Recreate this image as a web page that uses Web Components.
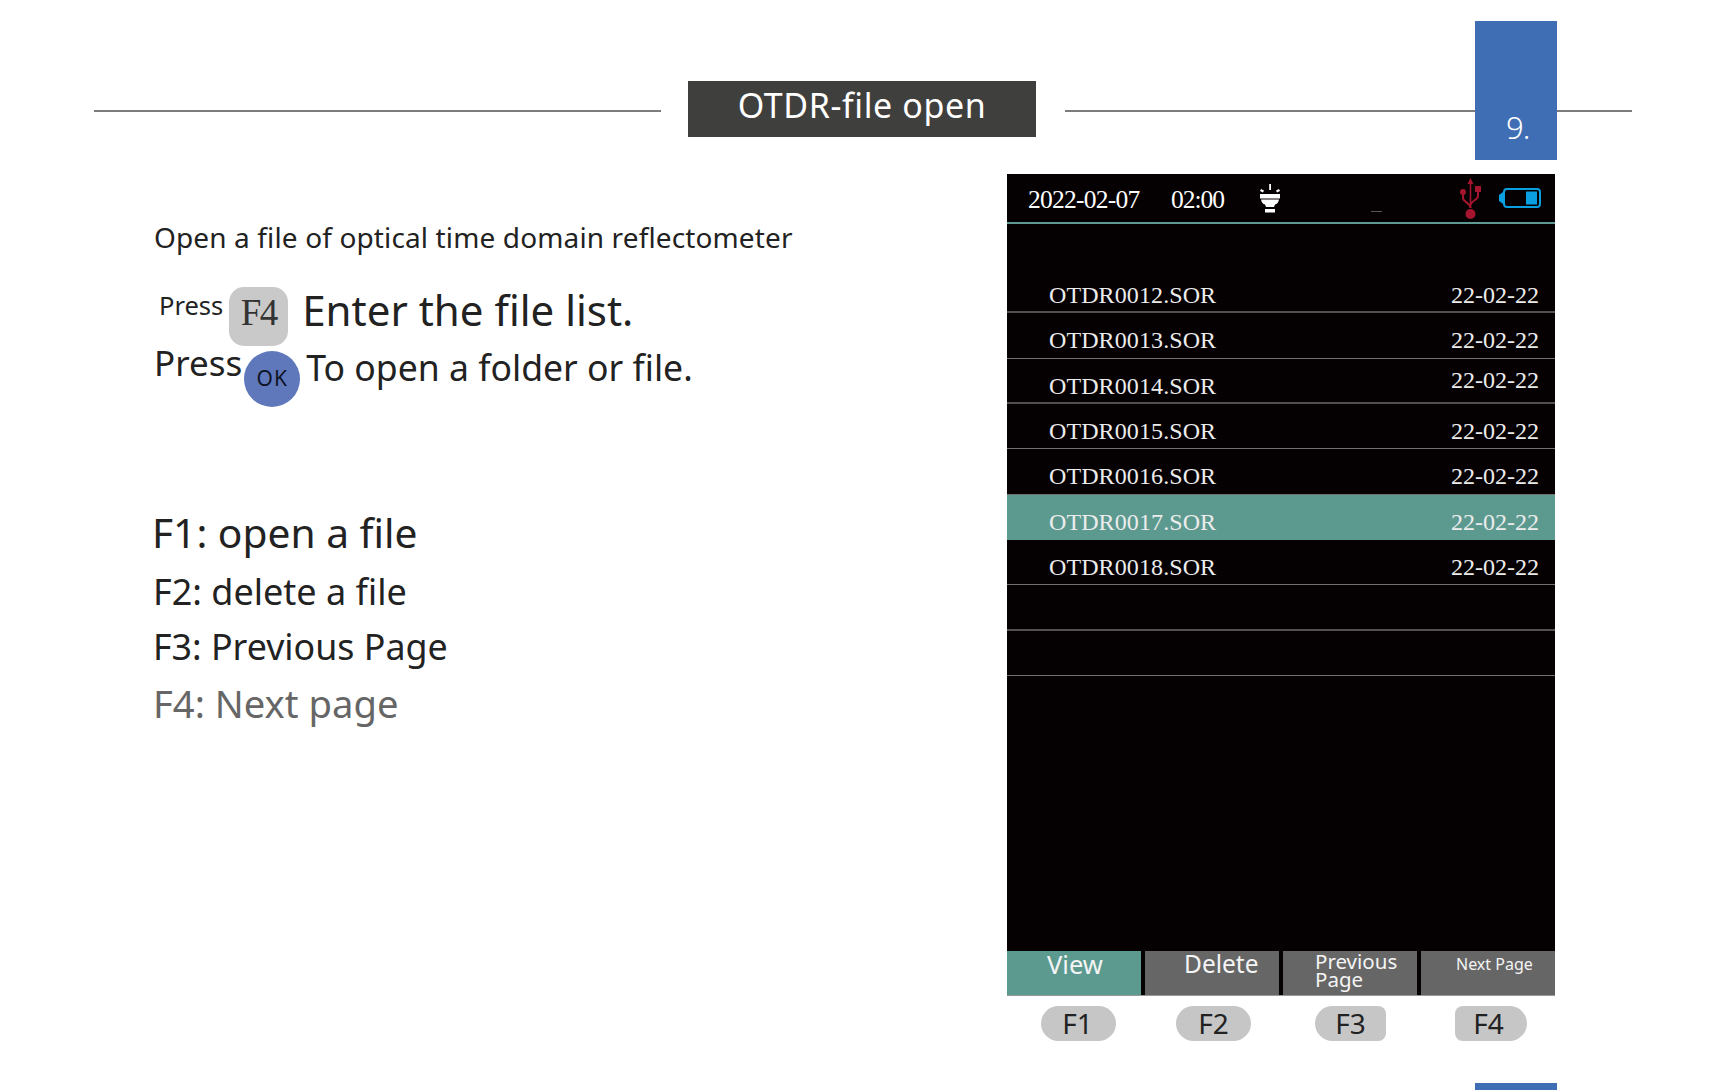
<!DOCTYPE html>
<html>
<head>
<meta charset="utf-8">
<style>
    html, body { margin: 0; background: #fff; }
    body { font-family: 'Noto Sans', sans-serif; color: #222; }
</style>
</head>
<body>

<template id="slide-page-tmpl">
    <style>
        :host { display: flex; flex-direction: column; width: 1724px; height: 1091px; overflow: hidden; position: relative; }
        .body { display: flex; padding: 37px 0 0 0; }
        .left { width: 1007px; box-sizing: border-box; padding: 45px 0 0 153px; }
        .foot { display: flex; justify-content: flex-end; padding: 42px 167px 0 0; }
    </style>
    <slot name="header"></slot>
    <div class="body">
        <div class="left"><slot name="text"></slot></div>
        <div><slot name="device"></slot></div>
    </div>
    <div class="foot"><slot name="foot"></slot></div>
</template>

<template id="slide-header-tmpl">
    <style>
        :host { display: flex; align-items: center; padding: 81px 92px 0 94px; position: relative; }
        .line { flex: 1; height: 2px; background: #7c7c7c; margin-top: 4px; }
        .title { width: 348px; height: 56px; margin: 0 29px 0 27px; background: #3f3f3e; color: #fff; font-size: 34px; letter-spacing: 0.6px; display: flex; align-items: center; justify-content: center; padding-bottom: 8px; box-sizing: border-box; }
        .num { position: absolute; left: 1475px; top: 21px; }
    </style>
    <div class="line"></div>
    <div class="title"><slot></slot></div>
    <div class="line"></div>
    <page-tab class="num" label="9."></page-tab>
</template>

<template id="page-tab-tmpl">
    <style>
        :host { display: block; width: 82px; background: #3f6eb4; color: #fff; font-size: 31px; font-weight: 300; }
        div { height: 139px; box-sizing: border-box; padding: 85px 0 0 31px; letter-spacing: -1px; }
        :host([stub]) div { height: 7px; padding: 0; }
    </style>
    <div></div>
</template>

<template id="text-line-tmpl">
    <style>
        :host { display: flex; align-items: flex-start; }
        :host([muted]) { color: #666; }
    </style>
    <slot></slot>
</template>

<template id="key-cap-tmpl">
    <style>
        :host { display: flex; align-items: center; justify-content: center; box-sizing: border-box; }
        :host([kind='f']) { width: 59px; height: 59px; border-radius: 15px; background: #c9c9c9; color: #333; font: 37px 'Liberation Serif', serif; letter-spacing: -1.5px; padding-bottom: 8px; }
        :host([kind='ok']) { width: 56px; height: 56px; border-radius: 50%; background: #5f78bc; color: #0f1426; font: 21px 'Noto Sans', sans-serif; letter-spacing: 1px; padding-bottom: 2px; }
    </style>
    <slot></slot>
</template>

<template id="device-screen-tmpl">
    <style>
        :host { display: block; width: 548px; }
        .screen { height: 822px; background: #050002; display: flex; flex-direction: column; }
        .status { height: 48px; border-bottom: 2px solid #5f9a94; padding: 0 14px 0 21px; display: flex; align-items: center; color: #fff; font: 25.500px 'Liberation Serif', serif; position: relative; }
        .date { width: 143px; letter-spacing: -0.74px; padding-top: 3px; }
        .time { width: 89px; letter-spacing: -1px; padding-top: 3px; }
        .lamp { width: 20px; height: 29px; }
        .usb { width: 21px; height: 41px; margin-left: auto; margin-right: 18px; }
        .batt { width: 42px; height: 20px; }
        .dash { position: absolute; left: 364px; top: 37px; width: 11px; height: 1px; background: #555; }
        .list { padding-top: 44px; }
        .soft { margin-top: auto; display: flex; gap: 4px; border-bottom: 1px solid #999; }
        .pills { display: flex; padding-top: 10px; }
    </style>
    <div class="screen">
        <div class="status">
            <span class="date">2022-02-07</span><span class="time">02:00</span>
            <svg class="lamp" viewBox="0 0 20 29">
                <path fill="#fff" d="M1 5l3 1.500-1 2L0 7zM9.200 0h1.800v6H9.200zM19 5l1 2-3 1.500-1-2z"/>
                <path fill="#fff" d="M0 10h20v4.500H0zM1 15.500h18c-.5 3-2 4.500-4 5l-1 2.500H6l-1-2.500c-2-.5-3.500-2-4-5zM5 25h10v3.500H5z"/>
            </svg>
            <i class="dash"></i>
            <svg class="usb" viewBox="0 0 21 41">
                <g fill="#a5162e">
                    <path d="M10.500 0l3 6h-2.200v24h-1.600V6H7.500z"/>
                    <path fill="none" stroke="#a5162e" stroke-width="2" d="M3 14v6c0 4 7.500 5 7.500 10M18 11v7c0 4-7.500 5-7.500 9"/>
                    <circle cx="3" cy="14" r="3"/>
                    <rect x="15" y="8" width="6" height="6"/>
                    <circle cx="10.500" cy="36" r="5"/>
                </g>
            </svg>
            <svg class="batt" viewBox="0 0 42 20">
                <path fill="#0a9fe0" d="M0 7l4-3v12l-4-3z"/>
                <rect x="5" y="1" width="36" height="18" rx="3" fill="none" stroke="#0a9fe0" stroke-width="2"/>
                <rect x="27" y="3.500" width="11" height="13" fill="#0a9fe0"/>
            </svg>
        </div>
        <div class="list"><slot name="row"></slot></div>
        <div class="soft"><slot name="soft"></slot></div>
    </div>
    <div class="pills"><slot name="pill"></slot></div>
</template>

<template id="file-row-tmpl">
    <style>
        :host { display: flex; box-sizing: border-box; height: 45.350px; padding: 12px 16px 0 42px; justify-content: space-between; border-bottom: 1px solid #707070; color: #ececec; font: 24px/30px 'Liberation Serif', serif; }
        :host([thick]) { border-bottom: 2px solid #505050; }
        :host([selected]) { background: #5c9a90; border-bottom-color: #5c9a90; }
        .name { letter-spacing: 0.1px; }
        :host([lift]) .date { margin-top: -6px; }
    </style>
    <span class="name"><slot></slot></span>
    <span class="date"><slot name="date"></slot></span>
</template>

<template id="soft-key-tmpl">
    <style>
        :host { display: block; flex: 1; height: 44px; box-sizing: border-box; background: #666; color: #f4f4f4; font-size: 24.500px; line-height: 26px; }
        :host([active]) { background: #5c9a90; }
        div { padding: var(--pad, 0 0 0 0); }
    </style>
    <div><slot></slot></div>
</template>

<template id="fn-pill-tmpl">
    <style>
        :host { display: flex; box-sizing: border-box; height: 35px; border-radius: var(--radius, 18px); background: #c6c6c6; color: #222; font-size: 28px; line-height: 35px; justify-content: center; }
    </style>
    <slot></slot>
</template>

<script>
    function tpl(name) {
        return class extends HTMLElement {
            connectedCallback() {
                if (this.shadowRoot) return;
                this.attachShadow({ mode: 'open' });
                this.shadowRoot.append(document.getElementById(name + '-tmpl').content.cloneNode(true));
                if (name == 'page-tab' && this.getAttribute('label')) {
                    this.shadowRoot.querySelector('div').textContent = this.getAttribute('label');
                }
            }
        };
    }
    ['slide-page', 'slide-header', 'page-tab', 'text-line', 'key-cap', 'device-screen', 'file-row', 'soft-key', 'fn-pill']
        .forEach((n) => customElements.define(n, tpl(n)));
</script>

<slide-page>
    <slide-header slot="header">OTDR-file open</slide-header>

    <div slot="text">
        <text-line style="font-size:28px;line-height:36px;height:68px;letter-spacing:0.13px;margin-left:1px">Open a file of optical time domain reflectometer</text-line>
        <text-line style="height:64px;margin-left:1px">
            <span style="font-size:25.500px;line-height:32px;margin:2px 6px 0 5px">Press</span>
            <key-cap kind="f">F4</key-cap>
            <span style="font-size:42px;line-height:52px;margin:-3px 0 0 14px">Enter the file list.</span>
        </text-line>
        <text-line style="height:156px;margin-left:1px">
            <span style="font-size:35px;line-height:44px;margin:-10px 2px 0 0">Press</span>
            <key-cap kind="ok">OK</key-cap>
            <span style="font-size:35.600px;line-height:44px;margin:-6px 0 0 6px">To open a folder or file.</span>
        </text-line>
        <text-line style="font-size:40.700px;line-height:50px;height:60px;margin-left:-1px">F1: open a file</text-line>
        <text-line style="font-size:36px;line-height:50px;height:54px">F2: delete a file</text-line>
        <text-line style="font-size:35.800px;line-height:50px;height:57px">F3: Previous Page</text-line>
        <text-line muted style="font-size:38.200px;line-height:50px">F4: Next page</text-line>
    </div>

    <device-screen slot="device">
        <file-row slot="row" thick>OTDR0012.SOR<span slot="date">22-02-22</span></file-row>
        <file-row slot="row">OTDR0013.SOR<span slot="date">22-02-22</span></file-row>
        <file-row slot="row" lift thick>OTDR0014.SOR<span slot="date">22-02-22</span></file-row>
        <file-row slot="row">OTDR0015.SOR<span slot="date">22-02-22</span></file-row>
        <file-row slot="row">OTDR0016.SOR<span slot="date">22-02-22</span></file-row>
        <file-row slot="row" selected>OTDR0017.SOR<span slot="date">22-02-22</span></file-row>
        <file-row slot="row">OTDR0018.SOR<span slot="date">22-02-22</span></file-row>
        <file-row slot="row" thick></file-row>
        <file-row slot="row"></file-row>

        <soft-key slot="soft" active style="--pad:0 0 0 40px;font-size:25.500px">View</soft-key>
        <soft-key slot="soft" style="--pad:0 0 0 39px">Delete</soft-key>
        <soft-key slot="soft" style="--pad:1px 0 0 32px;font-size:20.500px;line-height:18px">Previous Page</soft-key>
        <soft-key slot="soft" style="--pad:0 0 0 35px;font-size:16px">Next Page</soft-key>

        <fn-pill slot="pill" style="width:75px;margin-left:34px;padding-right:2px">F1</fn-pill>
        <fn-pill slot="pill" style="width:75px;margin-left:60px">F2</fn-pill>
        <fn-pill slot="pill" style="width:71px;margin-left:64px;--radius:18px 8px 8px 18px">F3</fn-pill>
        <fn-pill slot="pill" style="width:72px;margin-left:69px;padding-right:5px;--radius:8px 18px 18px 8px">F4</fn-pill>
    </device-screen>

    <page-tab slot="foot" stub></page-tab>
</slide-page>

</body>
</html>
